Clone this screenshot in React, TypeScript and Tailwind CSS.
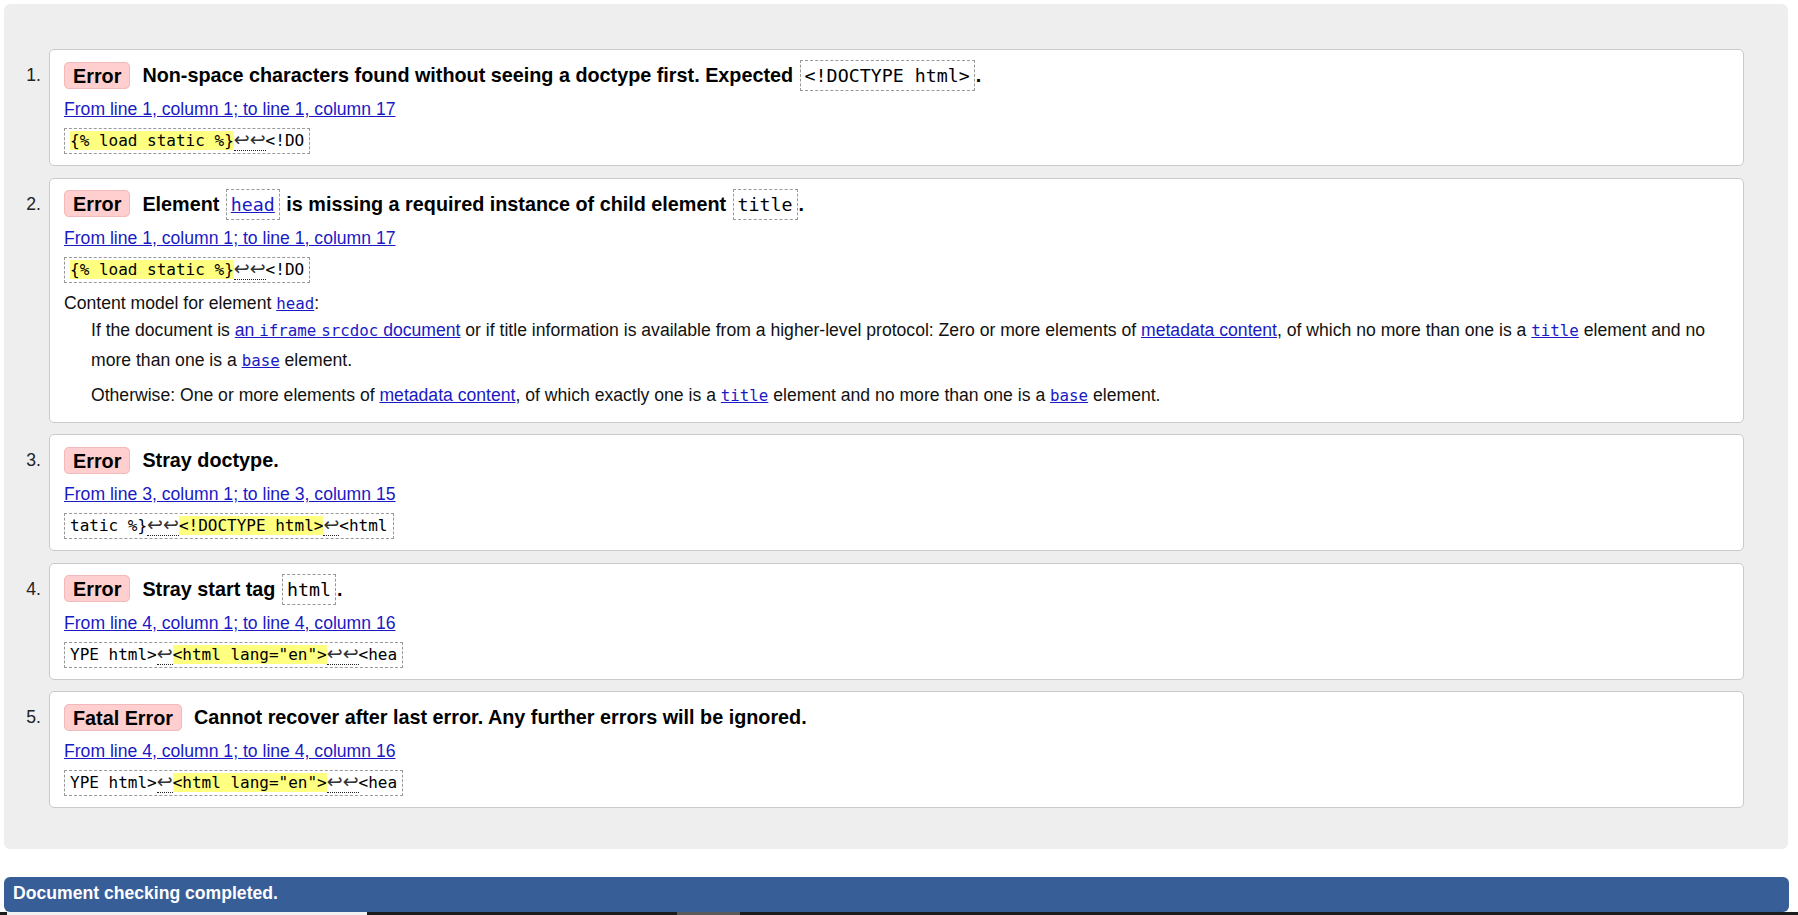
import React from 'react';

const mono = "font-['DejaVu_Sans_Mono',monospace]";
const link = 'text-[#1a1ac4] underline';

function Badge({ children }: { children: React.ReactNode }) {
  return (
    <span className="bg-[#ffcfcf] border border-[#f1b9b9] rounded-[5px] px-[8px] py-[1.5px] mr-[12px]">
      {children}
    </span>
  );
}

function HCode({ children }: { children: React.ReactNode }) {
  return (
    <code className={`${mono} font-normal text-[18.3px] leading-[0px] border border-dashed border-[#999] px-[4px] py-[4px] mx-[1px]`}>
      {children}
    </code>
  );
}

function Lf({ n }: { n: number }) {
  return (
    <span className="font-['DejaVu_Sans',sans-serif] text-[19px] leading-[0px] text-[#333] border-b border-dotted border-[#222]">
      {'\u21A9'.repeat(n)}
    </span>
  );
}

function Hl({ children }: { children: React.ReactNode }) {
  return <span className="bg-[#ffff80]">{children}</span>;
}

function Extract({ children }: { children: React.ReactNode }) {
  return (
    <div className="mt-[6px] h-[26px]">
      <code className={`${mono} inline-block h-[26px] text-[16px] leading-[20px] border border-dashed border-[#999] px-[5px] py-[2px] text-black whitespace-pre`}>
        {children}
      </code>
    </div>
  );
}

function Location({ text }: { text: string }) {
  return (
    <p className="mt-[8px] leading-[24px]">
      <a className={link}>{text}</a>
    </p>
  );
}

function Card({ n, children }: { n: number; children: React.ReactNode }) {
  return (
    <div className="flex">
      <div className="w-[45px] shrink-0 pt-[12px] pr-[8px] text-right leading-[28px] text-[#222]">{n}.</div>
      <div className="flex-1 bg-white border border-[#cacaca] rounded-[5px] px-[14px] pt-[11px] pb-[12px]">
        {children}
      </div>
    </div>
  );
}

function Heading({ badge, children }: { badge: string; children: React.ReactNode }) {
  return (
    <p className="h-[28px] text-[19.8px] font-bold leading-[28px] text-black whitespace-nowrap">
      <Badge>{badge}</Badge>
      {children}
    </p>
  );
}

function MCode({ children }: { children: React.ReactNode }) {
  return <code className={`${mono} text-[15.8px] leading-[0px]`}>{children}</code>;
}

export default function App() {
  return (
    <div className="w-[1798px] h-[915px] overflow-hidden bg-white font-['Liberation_Sans',Arial,sans-serif] text-[17.6px] text-[#111]">
      {/* results panel */}
      <div className="ml-[4px] mt-[4px] w-[1784px] bg-[#eeeeee] rounded-[6px] pt-[45px] pb-[41px] pr-[44px] flex flex-col gap-[11.5px]">
        <Card n={1}>
          <Heading badge="Error">
            Non-space characters found without seeing a doctype first. Expected <HCode>{'<!DOCTYPE html>'}</HCode>.
          </Heading>
          <Location text="From line 1, column 1; to line 1, column 17" />
          <Extract>
            <Hl>{'{% load static %}'}</Hl>
            <Lf n={2} />
            {'<!DO'}
          </Extract>
        </Card>

        <Card n={2}>
          <Heading badge="Error">
            Element{' '}
            <HCode>
              <a className={`${link} text-[#1a1ac4]`}>head</a>
            </HCode>{' '}
            is missing a required instance of child element <HCode>title</HCode>.
          </Heading>
          <Location text="From line 1, column 1; to line 1, column 17" />
          <Extract>
            <Hl>{'{% load static %}'}</Hl>
            <Lf n={2} />
            {'<!DO'}
          </Extract>
          <p className="mt-[9px] h-[24px] leading-[24px]">
            Content model for element <a className={link}><MCode>head</MCode></a>:
          </p>
          <div className="ml-[27px] leading-[30px]">
            <p className="h-[60px]">
              If the document is{' '}
              <a className={link}>
                an <MCode>iframe</MCode> <MCode>srcdoc</MCode> document
              </a>{' '}
              or if title information is available from a higher-level protocol: Zero or more elements of{' '}
              <a className={link}>metadata content</a>, of which no more than one is a{' '}
              <a className={link}><MCode>title</MCode></a> element and no more than one is a{' '}
              <a className={link}><MCode>base</MCode></a> element.
            </p>
            <p className="mt-[5px] h-[30px]">
              Otherwise: One or more elements of <a className={link}>metadata content</a>, of which exactly one is a{' '}
              <a className={link}><MCode>title</MCode></a> element and no more than one is a{' '}
              <a className={link}><MCode>base</MCode></a> element.
            </p>
          </div>
        </Card>

        <Card n={3}>
          <Heading badge="Error">Stray doctype.</Heading>
          <Location text="From line 3, column 1; to line 3, column 15" />
          <Extract>
            {'tatic %}'}
            <Lf n={2} />
            <Hl>{'<!DOCTYPE html>'}</Hl>
            <Lf n={1} />
            {'<html'}
          </Extract>
        </Card>

        <Card n={4}>
          <Heading badge="Error">
            Stray start tag <HCode>html</HCode>.
          </Heading>
          <Location text="From line 4, column 1; to line 4, column 16" />
          <Extract>
            {'YPE html>'}
            <Lf n={1} />
            <Hl>{'<html lang="en">'}</Hl>
            <Lf n={2} />
            {'<hea'}
          </Extract>
        </Card>

        <Card n={5}>
          <Heading badge="Fatal Error">Cannot recover after last error. Any further errors will be ignored.</Heading>
          <Location text="From line 4, column 1; to line 4, column 16" />
          <Extract>
            {'YPE html>'}
            <Lf n={1} />
            <Hl>{'<html lang="en">'}</Hl>
            <Lf n={2} />
            {'<hea'}
          </Extract>
        </Card>
      </div>

      {/* status bar */}
      <div className="ml-[4px] mt-[28px] w-[1785px] h-[35px] rounded-[6px] bg-[#375e97] text-white font-bold leading-[32px] pl-[9px]">
        Document checking completed.
      </div>

      {/* strip peeking in at the bottom */}
      <div className="flex h-[3px]">
        <div className="w-[7px] bg-[#1c1c1c]" />
        <div className="w-[360px] bg-[#f2f2f2]" />
        <div className="w-[310px] bg-[#1c1c1c]" />
        <div className="w-[63px] bg-[#5a5a5a]" />
        <div className="flex-1 bg-[#1c1c1c]" />
      </div>
    </div>
  );
}
